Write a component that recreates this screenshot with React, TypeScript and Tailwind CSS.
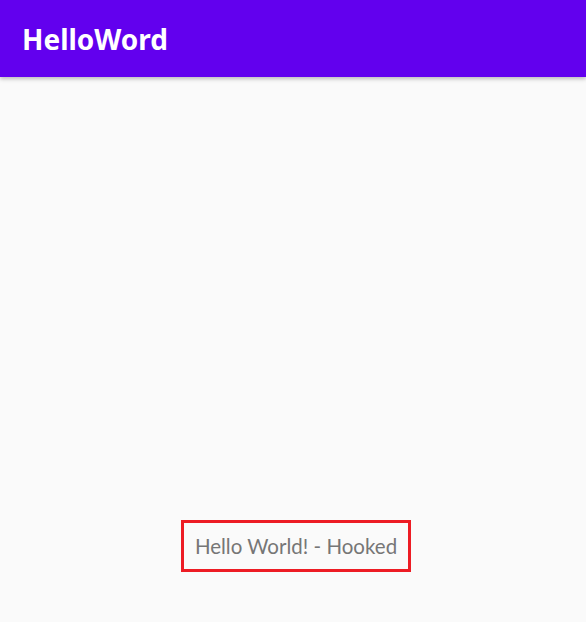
export default function App() {
  return (
    <div className="flex h-[622px] w-[586px] flex-col bg-[#fafafa]" style={{ fontFamily: '"Noto Sans", sans-serif' }}>
      <header className="relative z-10 flex h-[77px] shrink-0 items-center bg-[#6200ee] pl-[22px] shadow-[0_2px_4px_rgba(0,0,0,0.25)]">
        <h1 className="text-[28px] font-bold leading-none tracking-[0px] text-white">HelloWord</h1>
      </header>
      <main className="flex flex-1 flex-col items-center justify-end pb-[50px] pl-[6px]">
        <div className="flex h-[52px] w-[230px] items-center justify-center border-[3px] border-[#ed1c24]">
          <span className="text-[20.5px] leading-none text-[#767676]" style={{ fontFamily: 'Lato, sans-serif' }}>
            Hello World! - Hooked
          </span>
        </div>
      </main>
    </div>
  );
}
